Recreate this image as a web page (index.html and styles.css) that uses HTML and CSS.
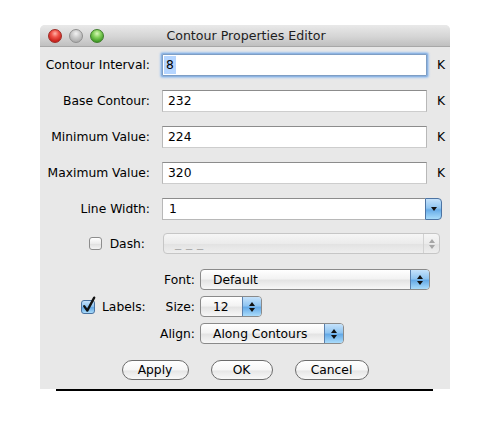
FILE: index.html
```html
<!DOCTYPE html>
<html>
<head>
<meta charset="utf-8">
<title>Contour Properties Editor</title>
<link rel="stylesheet" href="styles.css">
</head>
<body>
<div class="window">
  <div class="titlebar">
    <div class="lights">
      <span class="light red"></span>
      <span class="light gray"></span>
      <span class="light green"></span>
    </div>
    <div class="title">Contour Properties Editor</div>
    <div></div>
  </div>
  <div class="content">
    <div class="row">
      <div class="lbl">Contour Interval:</div>
      <div class="field focus"><span class="sel">8</span></div>
      <div class="unit">K</div>
    </div>
    <div class="row">
      <div class="lbl">Base Contour:</div>
      <div class="field">232</div>
      <div class="unit">K</div>
    </div>
    <div class="row">
      <div class="lbl">Minimum Value:</div>
      <div class="field">224</div>
      <div class="unit">K</div>
    </div>
    <div class="row">
      <div class="lbl">Maximum Value:</div>
      <div class="field">320</div>
      <div class="unit">K</div>
    </div>
    <div class="row row-last">
      <div class="lbl">Line Width:</div>
      <div class="combo">
        <div class="combo-text">1</div>
        <div class="combo-btn"><span class="tri-down"></span></div>
      </div>
    </div>
    <div class="row dash-row">
      <div class="lbl check-lbl">
        <span class="checkbox"></span>
        <span>Dash:</span>
      </div>
      <div class="dis-combo">
        <div class="dis-text">_ _ _</div>
        <div class="dis-arr"><span class="tri-up gray"></span><span class="tri-down gray"></span></div>
      </div>
    </div>
    <div class="group">
      <div class="group-check">
        <span class="checkbox checked">
          <svg class="tick" width="16" height="18" viewBox="0 0 16 18"><path d="M3.2 10.2 L6.3 14.6 L13.2 1.6" fill="none" stroke="#111" stroke-width="2.3" stroke-linecap="round" stroke-linejoin="round"/></svg>
        </span>
        <span>Labels:</span>
      </div>
      <div class="group-grid">
        <div class="sublbl">Font:</div>
        <div class="popup popup-font"><div class="pval">Default</div><div class="parr"><span class="tri-up"></span><span class="tri-down"></span></div></div>
        <div class="sublbl">Size:</div>
        <div class="popup popup-size"><div class="pval">12</div><div class="parr"><span class="tri-up"></span><span class="tri-down"></span></div></div>
        <div class="sublbl">Align:</div>
        <div class="popup popup-align"><div class="pval">Along Contours</div><div class="parr"><span class="tri-up"></span><span class="tri-down"></span></div></div>
      </div>
    </div>
  </div>
  <div class="buttons">
    <div class="btn btn-apply">Apply</div>
    <div class="btn btn-ok">OK</div>
    <div class="btn btn-cancel">Cancel</div>
  </div>
</div>
<div class="rule"></div>
</body>
</html>
```

FILE: styles.css
```css
body {
  margin: 0;
  padding-top: 25px;
  background: #ffffff;
  font-family: "DejaVu Sans", "Noto Sans", sans-serif;
  font-size: 12.3px;
  color: #000;
}

.window {
  margin-left: 40px;
  width: 410px;
  background: #e8e8e8;
  border-radius: 5px 5px 0 0;
}

.titlebar {
  height: 22px;
  box-sizing: border-box;
  display: grid;
  grid-template-columns: 1fr auto 1fr;
  align-items: center;
  background: linear-gradient(#e9e9e9, #d5d5d5 55%, #c0c0c0);
  border-bottom: 1px solid #a8a8a8;
  border-radius: 5px 5px 0 0;
}

.lights {
  display: flex;
  gap: 7px;
  padding-left: 8px;
}

.light {
  width: 14px;
  height: 14px;
  box-sizing: border-box;
  border-radius: 50%;
}

.light.red {
  background: radial-gradient(circle at 50% 30%, #ffb3a8 0%, #f0544a 35%, #c8201a 75%, #d8463e 100%);
  border: 1px solid #9c2a25;
}

.light.gray {
  background: radial-gradient(circle at 50% 30%, #f2f2f2 0%, #cbcbcb 40%, #acacac 80%, #c4c4c4 100%);
  border: 1px solid #8f8f8f;
}

.light.green {
  background: radial-gradient(circle at 50% 30%, #d8f7b8 0%, #82cf5a 38%, #3f9a25 78%, #60b441 100%);
  border: 1px solid #3e7d2a;
}

.title {
  font-size: 12.6px;
  color: #1e1e1e;
  padding-left: 2px;
}

.content {
  padding-top: 7px;
  display: flex;
  flex-direction: column;
}

.row {
  display: flex;
  align-items: center;
  height: 22px;
  margin-bottom: 14px;
}

.row.row-last {
  margin-bottom: 13px;
}

.lbl {
  width: 110px;
  flex: none;
  text-align: right;
}

.field {
  margin-left: 12px;
  width: 265px;
  height: 22px;
  box-sizing: border-box;
  background: #fff;
  border: 1px solid #b8b8b8;
  border-top-color: #8c8c8c;
  border-bottom-color: #cdcdcd;
  display: flex;
  align-items: center;
  padding-left: 5px;
}

.field.focus {
  border-color: #7e9ec4;
  box-shadow: 0 0 0 1px #8eb4e2, 0 0 2px 2px #a4c6ee;
  border-radius: 1px;
}

.sel {
  margin-left: -4px;
  padding: 0 2px;
  height: 18px;
  line-height: 18px;
  background: #b5d5ff;
}

.unit {
  margin-left: 10px;
}

/* combo box */
.combo {
  margin-left: 12px;
  width: 280px;
  height: 22px;
  display: flex;
}

.combo-text {
  flex: 1;
  box-sizing: border-box;
  background: #fff;
  border: 1px solid #b8b8b8;
  border-top-color: #8c8c8c;
  border-right: none;
  display: flex;
  align-items: center;
  padding-left: 6px;
}

.combo-btn {
  width: 17px;
  box-sizing: border-box;
  border: 1px solid #4d74a3;
  border-radius: 0 4px 4px 0;
  background: linear-gradient(#c5e2fb, #90c5f1 45%, #68ace8 55%, #a8dcfb);
  display: flex;
  align-items: center;
  justify-content: center;
}

.tri-down {
  width: 0;
  height: 0;
  border-left: 3px solid transparent;
  border-right: 3px solid transparent;
  border-top: 4px solid #111;
}

.tri-up {
  width: 0;
  height: 0;
  border-left: 3px solid transparent;
  border-right: 3px solid transparent;
  border-bottom: 4px solid #111;
}

.tri-down.gray {
  border-top-color: #a5a5a5;
}

.tri-up.gray {
  border-bottom-color: #a5a5a5;
}

/* dash row */
.dash-row {
  height: 21px;
}

.check-lbl {
  display: flex;
  align-items: center;
  justify-content: flex-end;
  gap: 8px;
  padding-right: 5px;
  box-sizing: border-box;
}

.checkbox {
  width: 13px;
  height: 13px;
  box-sizing: border-box;
  border: 1px solid #8d8d8d;
  border-radius: 3px;
  background: linear-gradient(#ffffff, #ececec 50%, #dedede 51%, #f4f4f4);
  flex: none;
  display: block;
}

.checkbox.checked {
  width: 14px;
  height: 14px;
  border-color: #4a72a0;
  background: linear-gradient(#c4e1fa, #8fc3f0 45%, #63a8e6 55%, #a9dbfa);
  overflow: visible;
}

.tick {
  display: block;
  margin: -5px 0 0 -1px;
  overflow: visible;
}

.dis-combo {
  margin-left: 13px;
  width: 277px;
  height: 21px;
  box-sizing: border-box;
  border: 1px solid #c6c6c6;
  border-radius: 4px;
  background: linear-gradient(#f6f6f6, #ebebeb 50%, #e2e2e2 52%, #eeeeee);
  display: flex;
}

.dis-text {
  flex: 1;
  color: #a8a8a8;
  padding-left: 11px;
  display: flex;
  align-items: center;
  letter-spacing: 0.5px;
  padding-bottom: 2px;
}

.dis-arr {
  width: 15px;
  border-left: 1px solid #d2d2d2;
  display: flex;
  flex-direction: column;
  align-items: center;
  justify-content: center;
  gap: 2px;
}

/* labels group */
.group {
  display: flex;
  align-items: center;
  margin-top: 1px;
}

.group-check {
  width: 110px;
  flex: none;
  box-sizing: border-box;
  padding-left: 41px;
  display: flex;
  align-items: center;
  gap: 7px;
}

.group-grid {
  display: grid;
  grid-template-columns: 45px auto;
  grid-auto-rows: 21px;
  column-gap: 5px;
  row-gap: 6px;
  align-items: center;
}

.sublbl {
  text-align: right;
}

.popup {
  height: 21px;
  box-sizing: border-box;
  border: 1px solid #8a8a8a;
  border-radius: 4px;
  background: linear-gradient(#ffffff, #f3f3f3 45%, #e4e4e4 55%, #f7f7f7);
  display: flex;
  overflow: hidden;
}

.popup-font { width: 230px; }
.popup-size { width: 62px; }
.popup-align { width: 144px; }

.pval {
  flex: 1;
  padding-left: 12px;
  display: flex;
  align-items: center;
}

.parr {
  width: 18px;
  border-left: 1px solid #5a80ad;
  background: linear-gradient(#c5e2fb, #90c5f1 45%, #65aae7 55%, #aadcfb);
  display: flex;
  flex-direction: column;
  align-items: center;
  justify-content: center;
  gap: 2px;
}

/* buttons */
.buttons {
  display: flex;
  justify-content: center;
  gap: 22px;
  padding: 16px 0 9px;
}

.btn {
  height: 20px;
  box-sizing: border-box;
  border: 1px solid #6c6c6c;
  border-radius: 10px;
  background: linear-gradient(#ffffff, #f6f6f6 50%, #e6e6e6 55%, #f8f8f8);
  display: flex;
  align-items: center;
  justify-content: center;
}

.btn-apply { width: 67px; }
.btn-ok { width: 62px; }
.btn-cancel { width: 74px; }

.rule {
  margin-left: 56px;
  width: 377px;
  height: 2px;
  background: #000;
}
```
